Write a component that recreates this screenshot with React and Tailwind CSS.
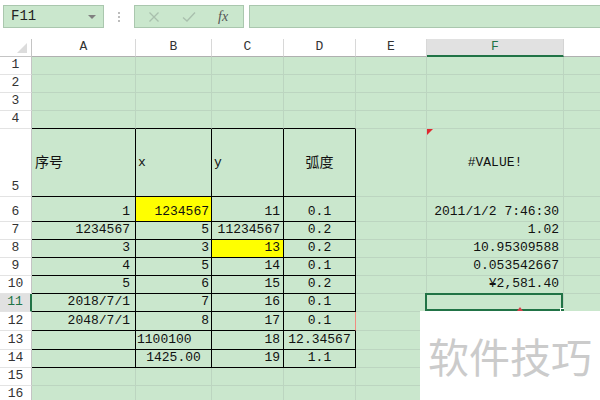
import React from "react";

const FONT = { fontFamily: '"Liberation Mono", "Noto Sans CJK SC", monospace' };
const COLS = ["A", "B", "C", "D", "E", "F", ""];
const GRID = "grid grid-cols-[32px_104px_76px_72px_72px_71px_137px_1fr]";

// row number, height, cells for A..D plus F
const rows = [
  { n: 1, h: "h-[18px]" },
  { n: 2, h: "h-[18px]" },
  { n: 3, h: "h-[18px]" },
  { n: 4, h: "h-[18px]" },
  { n: 5, h: "h-[68px]", a: "序号", b: "x", c: "y", d: "弧度", f: "#VALUE!", head: true },
  { n: 6, h: "h-[25px]", a: "1", b: "1234567", c: "11", d: "0.1", f: "2011/1/2 7:46:30", yb: true },
  { n: 7, h: "h-[18px]", a: "1234567", b: "5", c: "11234567", d: "0.2", f: "1.02" },
  { n: 8, h: "h-[18px]", a: "3", b: "3", c: "13", d: "0.2", f: "10.95309588", yc: true },
  { n: 9, h: "h-[18px]", a: "4", b: "5", c: "14", d: "0.1", f: "0.053542667" },
  { n: 10, h: "h-[18px]", a: "5", b: "6", c: "15", d: "0.2", f: "¥2,581.40" },
  { n: 11, h: "h-[18px]", a: "2018/7/1", b: "7", c: "16", d: "0.1", sel: true },
  { n: 12, h: "h-[19px]", a: "2048/7/1", b: "8", c: "17", d: "0.1", pink: true },
  { n: 13, h: "h-[19px]", a: "", b: "1100100", bl: true, c: "18", d: "12.34567" },
  { n: 14, h: "h-[18px]", a: "", b: "1425.00", bc: true, c: "19", d: "1.1" },
  { n: 15, h: "h-[18px]" },
  { n: 16, h: "h-[18px]" },
];

const gl = "border-[#bcd5c0]";

function Cell({ children, className = "" }) {
  return (
    <div className={`relative flex border-r border-b overflow-visible whitespace-nowrap text-[13px] leading-[16px] text-[#111] ${className}`}>
      {children}
    </div>
  );
}

function Row({ r }) {
  const inTable = r.n >= 5 && r.n <= 14;
  const tb = inTable ? "border-black" : r.n === 4 ? `border-r-[#bcd5c0] border-b-black` : gl;
  const v = r.head ? "items-center" : "items-end pb-[1px]";
  return (
    <div className={`${GRID} ${r.h}`}>
      <div
        className={`flex items-end justify-center pb-[1px] text-[13px] leading-[16px] border-b border-[#e3e3e3] ${
          r.sel
            ? "bg-[#e1e1e1] border-r-2 border-r-[#217346] text-[#217346]"
            : "bg-white border-r border-r-[#c4c4c4] text-[#333]"
        }`}
      >
        {r.n}
      </div>
      <Cell className={`bg-[#cae7cd] ${tb} ${v} ${r.head ? "pl-[3px]" : "justify-end pr-[5px]"}`}>
        {r.head ? <span className="text-[14px]">{r.a}</span> : r.a}
      </Cell>
      <Cell
        className={`${r.yb ? "bg-[#ffff00]" : "bg-[#cae7cd]"} ${tb} ${v} ${
          r.head ? "pl-[2px]" : r.bl ? "pl-[1px]" : r.bc ? "justify-center" : "justify-end pr-[2px]"
        }`}
      >
        {r.b}
      </Cell>
      <Cell className={`${r.yc ? "bg-[#ffff00]" : "bg-[#cae7cd]"} ${tb} ${v} ${r.head ? "pl-[2px]" : "justify-end pr-[3px]"}`}>
        {r.c}
      </Cell>
      <Cell className={`bg-[#cae7cd] ${tb} ${v} justify-center ${r.pink ? "border-r-[#f08c80]" : ""}`}>
        {r.head ? <span className="text-[14px]">{r.d}</span> : r.d}
      </Cell>
      <Cell className={`bg-[#cae7cd] ${gl}`} />
      <Cell className={`bg-[#cae7cd] ${gl} ${v} ${r.head ? "justify-center" : "justify-end pr-[4px]"}`}>
        {r.f}
        {r.head && (
          <span className="absolute top-0 left-0 w-0 h-0 border-t-[6px] border-r-[6px] border-t-[#e0282e] border-r-transparent" />
        )}
        {r.sel && (
          <>
            <span className="absolute -top-px -left-[2px] right-0 bottom-0 border-2 border-[#217346]" />
            <span className="absolute left-[90px] bottom-0 w-0 h-0 border-l-[3px] border-r-[3px] border-b-[4px] border-l-transparent border-r-transparent border-b-[#d8404a]" />
            <span className="absolute -right-[3px] -bottom-[3px] w-[6px] h-[6px] bg-[#217346] border border-white" />
          </>
        )}
      </Cell>
      <Cell className={`bg-[#cae7cd] ${gl} border-r-0`} />
    </div>
  );
}

export default function App() {
  return (
    <div className="relative w-[600px] h-[400px] overflow-hidden bg-white" style={FONT}>
      {/* formula bar */}
      <div className="flex h-[39px] pt-[5px]">
        <div className="ml-[3px] w-[101px] h-[23px] flex items-center justify-between px-[7px] bg-[#cae7cd] border border-[#aac7ae]">
          <span className="text-[14px] text-[#222]">F11</span>
          <span className="w-0 h-0 border-l-[4px] border-r-[4px] border-t-[4px] border-l-transparent border-r-transparent border-t-[#808080]" />
        </div>
        <div className="w-[30px] flex flex-col items-center justify-center gap-[2px] h-[23px]">
          <span className="w-[2px] h-[2px] bg-[#bdbdbd]" />
          <span className="w-[2px] h-[2px] bg-[#bdbdbd]" />
          <span className="w-[2px] h-[2px] bg-[#bdbdbd]" />
        </div>
        <div className="w-[110px] h-[23px] flex items-center bg-[#cae7cd] border border-[#aac7ae]">
          <svg width="12" height="12" viewBox="0 0 12 12" className="ml-[13px]">
            <path d="M1.5 1.5 L10.5 10.5 M10.5 1.5 L1.5 10.5" stroke="#a9bfad" strokeWidth="1.3" />
          </svg>
          <svg width="14" height="12" viewBox="0 0 14 12" className="ml-[22px]">
            <path d="M1 6.5 L5 10 L13 1.5" stroke="#a9bfad" strokeWidth="1.3" fill="none" />
          </svg>
          <span className="ml-[22px] text-[14px] italic text-[#555]" style={{ fontFamily: '"Liberation Serif", serif' }}>
            fx
          </span>
        </div>
        <div className="ml-[5px] flex-1 h-[23px] bg-[#cae7cd] border border-[#aac7ae] border-r-0" />
      </div>

      {/* column headers */}
      <div className={`${GRID} h-[18px] bg-white`}>
        <div className="relative border-r border-b border-[#c4c4c4]">
          <svg width="10" height="10" viewBox="0 0 10 10" className="absolute right-[4px] bottom-[3px]">
            <polygon points="10,0 10,10 0,10" fill="#dcdcdc" />
          </svg>
        </div>
        {COLS.map((c, i) =>
          c === "F" ? (
            <div
              key={i}
              className="flex items-end justify-center text-[13px] leading-[16px] bg-[#e1e1e1] text-[#217346] border-r border-r-[#d4d4d4] border-b-2 border-b-[#217346]"
            >
              {c}
            </div>
          ) : (
            <div
              key={i}
              className={`flex items-end justify-center pb-[1px] text-[13px] leading-[16px] text-[#333] border-b border-b-[#b0b0b0] ${
                c ? "border-r border-r-[#d8d8d8]" : ""
              }`}
            >
              {c}
            </div>
          )
        )}
      </div>

      {rows.map((r) => (
        <Row key={r.n} r={r} />
      ))}

      {/* watermark */}
      <div className="absolute left-[420px] top-[311px] w-[180px] h-[89px] bg-white flex items-center justify-center">
        <span className="text-[41px] leading-none text-[#cbcbcb]" style={{ fontFamily: '"Noto Sans CJK SC", sans-serif' }}>
          软件技巧
        </span>
      </div>
    </div>
  );
}
